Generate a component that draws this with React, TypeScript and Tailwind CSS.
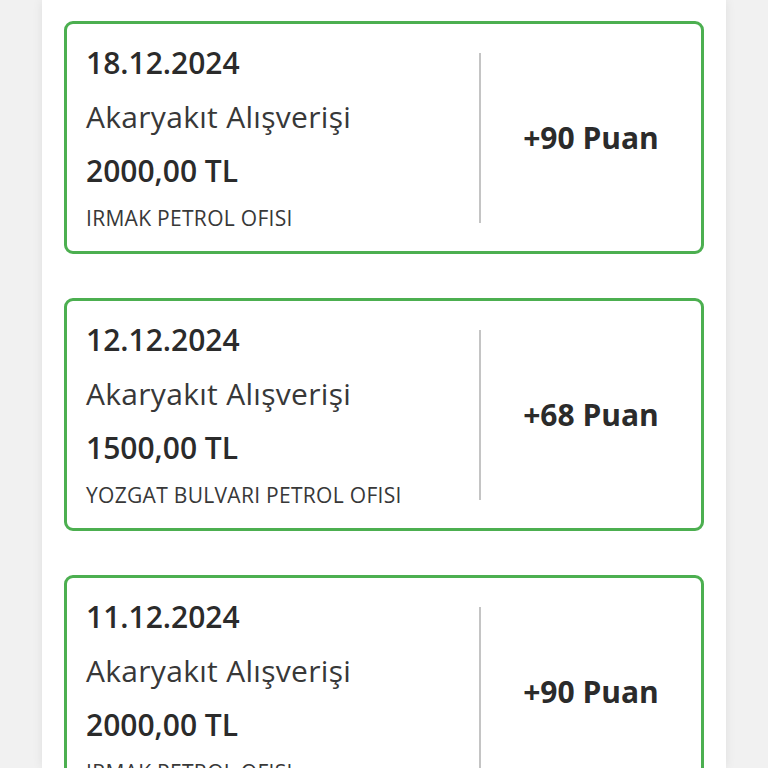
import React from "react";

type Item = { date: string; amount: string; station: string; points: string };

const items: Item[] = [
  { date: "18.12.2024", amount: "2000,00 TL", station: "IRMAK PETROL OFISI", points: "+90 Puan" },
  { date: "12.12.2024", amount: "1500,00 TL", station: "YOZGAT BULVARI PETROL OFISI", points: "+68 Puan" },
  { date: "11.12.2024", amount: "2000,00 TL", station: "IRMAK PETROL OFISI", points: "+90 Puan" },
];

function Card({ item }: { item: Item }) {
  return (
    <div className="flex h-[233px] w-[640px] shrink-0 rounded-[9px] border-[3px] border-[#4caf50] bg-white">
      <div className="flex w-[412px] flex-col pl-[19px] pt-[12px]">
        <div className="text-[30px] font-semibold leading-[54px] text-[#2b2b2b]">{item.date}</div>
        <div className="text-[30px] font-normal leading-[54px] tracking-[0.3px] text-[#383838]">Akaryakıt Alışverişi</div>
        <div className="text-[30px] font-semibold leading-[54px] text-[#2b2b2b]">{item.amount}</div>
        <div className="whitespace-nowrap text-[21px] font-normal leading-[40px] tracking-[0.3px] text-[#383838]">{item.station}</div>
      </div>
      <div className="flex items-center">
        <div className="h-[170px] w-[2px] bg-[#c4c4c4]" />
      </div>
      <div className="flex flex-1 items-center justify-center pb-[1px]">
        <div className="text-[30px] font-bold text-[#2b2b2b]">{item.points}</div>
      </div>
    </div>
  );
}

export default function App() {
  return (
    <div
      className="flex h-[768px] w-[768px] justify-center overflow-hidden bg-[#f1f1f1]"
      style={{ fontFamily: '"Open Sans", "Noto Sans", sans-serif' }}
    >
      <div className="flex w-[684px] flex-col items-center gap-[44px] bg-white pt-[21px] shadow-[0_0_10px_rgba(0,0,0,0.08)]">
        {items.map((it, i) => (
          <Card key={i} item={it} />
        ))}
      </div>
    </div>
  );
}
